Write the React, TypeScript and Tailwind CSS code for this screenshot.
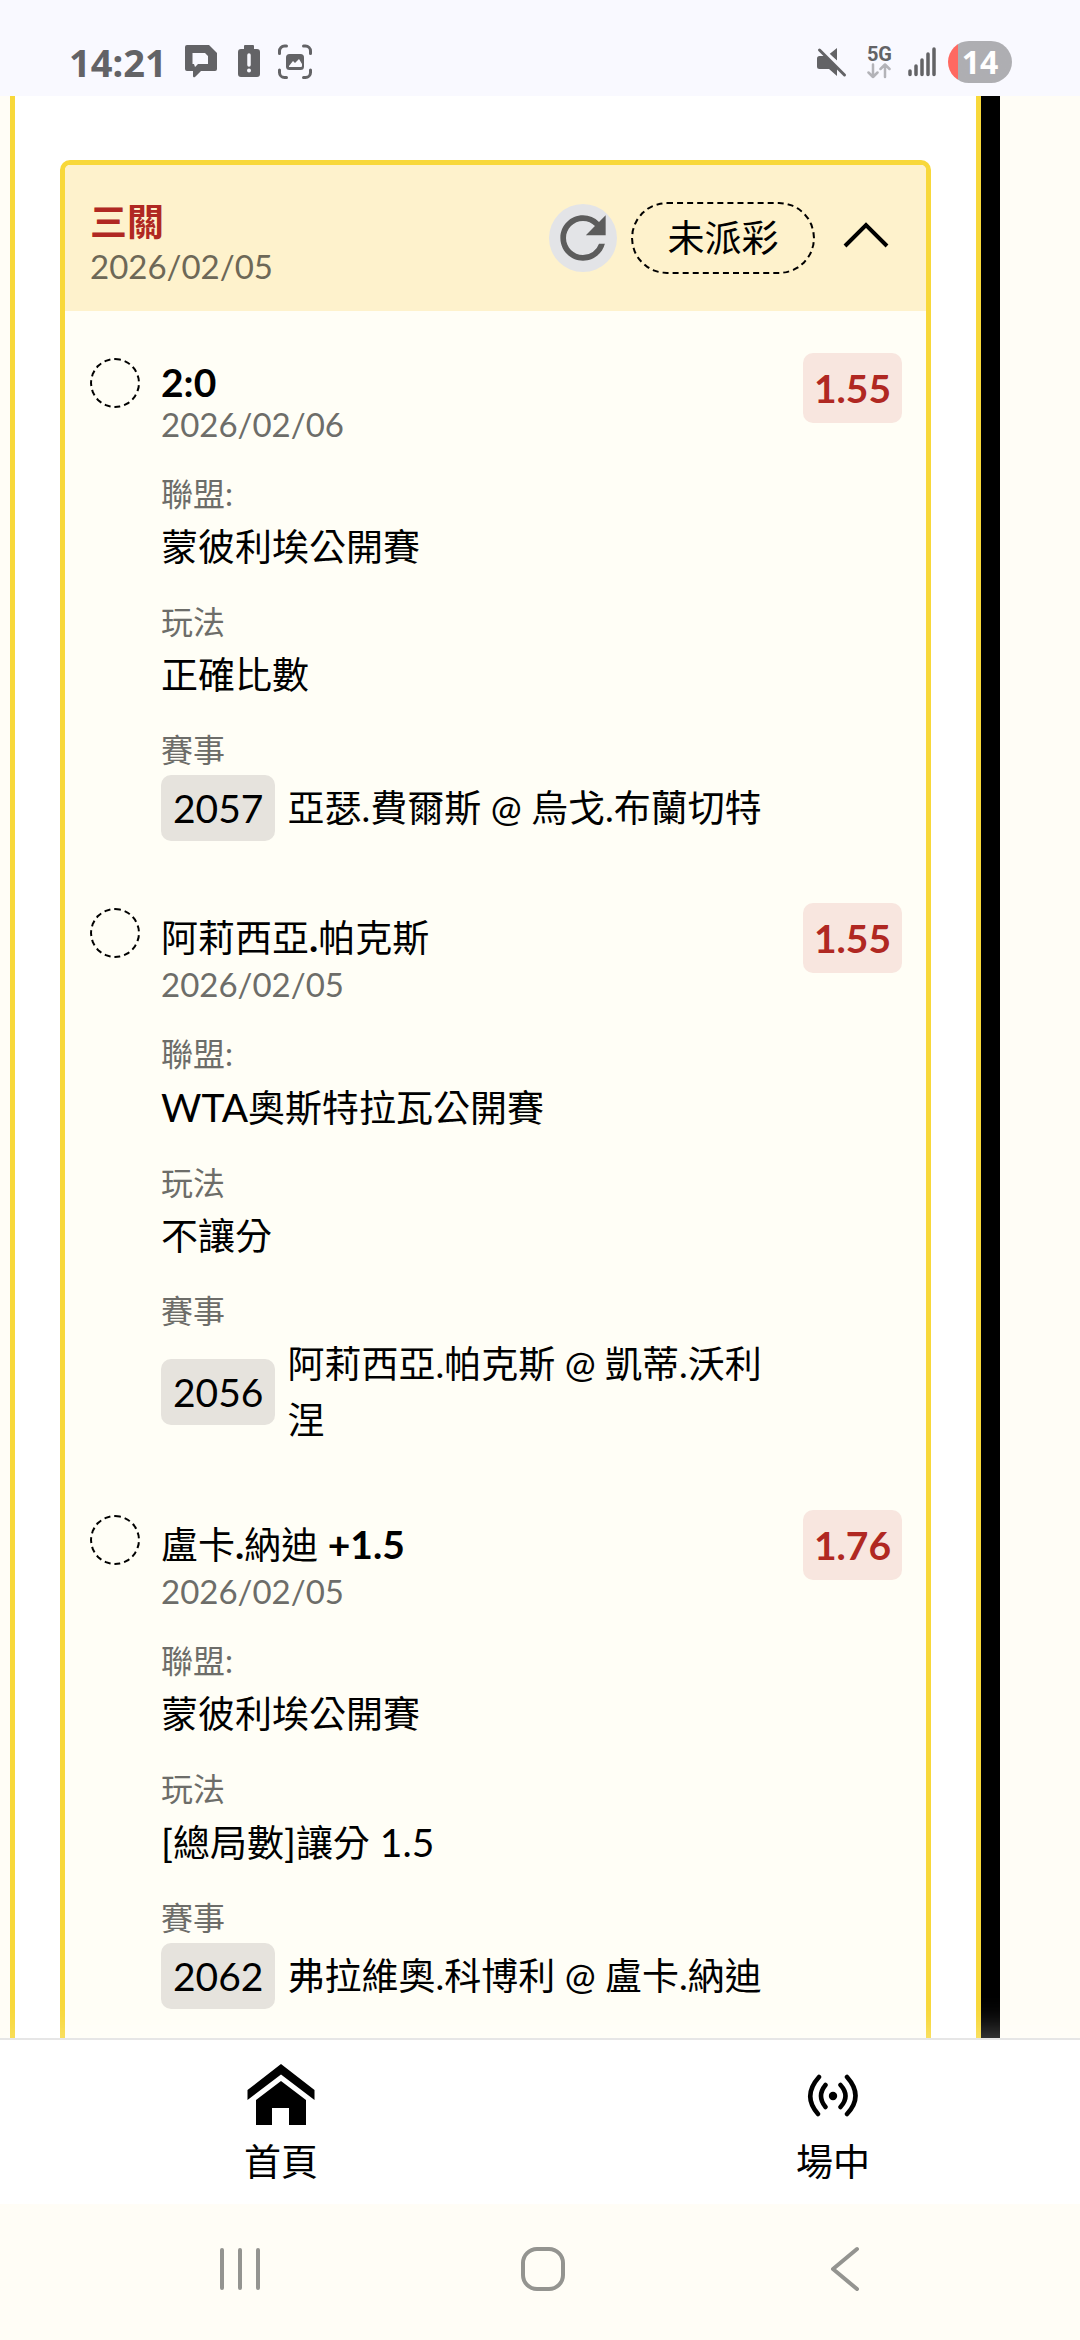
import { MdRefresh } from "react-icons/md";

type Leg = {
  pick: string;
  date: string;
  odds: string;
  league: string;
  play: string;
  code: string;
  match: string;
};

const legs: Leg[] = [
  {
    pick: "2:0",
    date: "2026/02/06",
    odds: "1.55",
    league: "蒙彼利埃公開賽",
    play: "正確比數",
    code: "2057",
    match: "亞瑟.費爾斯 @ 烏戈.布蘭切特",
  },
  {
    pick: "阿莉西亞.帕克斯",
    date: "2026/02/05",
    odds: "1.55",
    league: "WTA奧斯特拉瓦公開賽",
    play: "不讓分",
    code: "2056",
    match: "阿莉西亞.帕克斯 @ 凱蒂.沃利涅",
  },
  {
    pick: "盧卡.納迪 +1.5",
    date: "2026/02/05",
    odds: "1.76",
    league: "蒙彼利埃公開賽",
    play: "[總局數]讓分 1.5",
    code: "2062",
    match: "弗拉維奧.科博利 @ 盧卡.納迪",
  },
];

/* Latin runs are set slightly larger than the Chinese text around them. */
function Mixed({ text, bold = false }: { text: string; bold?: boolean }) {
  const runs = text.match(/[\u0000-\u00ff]+|[^\u0000-\u00ff]+/g) ?? [];
  return (
    <>
      {runs.map((run, i) =>
        run.charCodeAt(0) < 256 ? (
          <span key={i} className={bold ? "text-[39px] font-bold" : "text-[39px]"}>
            {run}
          </span>
        ) : (
          run
        ),
      )}
    </>
  );
}

function StatusBar() {
  return (
    <header className="flex h-24 shrink-0 items-center justify-between bg-[#f9f9ff] pt-7 pr-[68px] pl-[69px] text-[#636366]">
      <div className="flex items-center">
        <span className="font-['Noto_Sans'] text-[38px] leading-10 font-bold">14:21</span>
        <svg className="ml-[18px] h-9 w-8" viewBox="0 0 32 36" fill="currentColor" aria-label="訊息">
          <path
            fillRule="evenodd"
            d="M2 1h22l8 8v16a2 2 0 0 1-2 2H16l-6 6a1.200 1.200 0 0 1-2-1v-5H2a2 2 0 0 1-2-2V3a2 2 0 0 1 2-2Zm5.500 8v11H9l1 3 3-3h10v-8l-3-3Z"
          />
        </svg>
        <svg className="ml-5 h-9 w-6" viewBox="0 0 24 36" aria-label="電池">
          <path
            fill="currentColor"
            d="M8 1h8a1 1 0 0 1 1 1v3h3a3 3 0 0 1 3 3v22a3 3 0 0 1-3 3H4a3 3 0 0 1-3-3V8a3 3 0 0 1 3-3h3V2a1 1 0 0 1 1-1Z"
          />
          <path stroke="#f9f9ff" strokeWidth="3.500" strokeLinecap="round" d="M12 11v10" />
          <circle cx="12" cy="26.500" r="2" fill="#f9f9ff" />
        </svg>
        <svg className="ml-4 h-9 w-9" viewBox="0 0 36 36" fill="none" aria-label="螢幕擷取">
          <path
            stroke="currentColor"
            strokeWidth="3"
            strokeLinecap="round"
            d="M2.500 9.500V7a5 5 0 0 1 5-5h2M26.500 2h2a5 5 0 0 1 5 5v2.500M33.500 26v2.500a5 5 0 0 1-5 5h-2M9.500 33.500h-2a5 5 0 0 1-5-5V26"
          />
          <rect x="9" y="10" width="18" height="16" rx="3.500" fill="currentColor" />
          <path fill="#f9f9ff" d="m12 22 4-5 2 2 4-4 3 5v2a1 1 0 0 1-1 1H12Z" />
        </svg>
      </div>
      <div className="flex items-center">
        <svg className="h-8 w-8" viewBox="0 0 32 32" aria-label="靜音">
          <path
            fill="currentColor"
            d="M22 2v12.500L14.500 8ZM4.500 10h6L22 22v8l-8-7H4.500A2.500 2.500 0 0 1 2 20.500v-8A2.500 2.500 0 0 1 4.500 10Z"
          />
          <path stroke="#f9f9ff" strokeWidth="3" d="M6.500 1.500 31 26.500" />
          <path stroke="currentColor" strokeWidth="3" strokeLinecap="round" d="m4.500 4 25 25" />
        </svg>
        <div className="ml-5 flex flex-col items-center">
          <span className="font-[Roboto] text-xl leading-[18px] font-bold">5G</span>
          <svg
            className="h-4 w-6"
            viewBox="0 0 24 16"
            fill="none"
            stroke="#b3b3b8"
            strokeWidth="2.500"
            strokeLinecap="round"
            strokeLinejoin="round"
            aria-hidden="true"
          >
            <path d="M6 1.500V14M1.500 9.500 6 14l4.500-4.500M18 14V1.500M13.500 6 18 1.500 22.500 6" />
          </svg>
        </div>
        <svg
          className="ml-4 h-8 w-7"
          viewBox="0 0 28 32"
          stroke="currentColor"
          strokeWidth="3.500"
          strokeLinecap="round"
          aria-label="訊號"
        >
          <path d="M2 25v3.500M8 20v8.500M14 14v14.500M20 8v20.500M26 3v25.500" />
        </svg>
        <span className="ml-3 flex h-[42px] w-16 items-center justify-center rounded-full bg-linear-to-r from-[#ff6961] from-16% to-[#aeaeb2] to-16% font-['Noto_Sans'] text-[32px] leading-none font-bold text-white">
          14
        </span>
      </div>
    </header>
  );
}

function LegItem({ leg }: { leg: Leg }) {
  const latinOnly = /^[\u0000-\u00ff]+$/.test(leg.pick);
  return (
    <li className="flex items-start">
      <span className="mt-[5px] size-[50px] shrink-0 rounded-full border-2 border-dashed border-black" />
      <div className="ml-[21px] min-w-0 flex-1 pt-[6px]">
        <h3 className={latinOnly ? "leading-[46px]" : "leading-[57px]"}>
          <Mixed text={leg.pick} bold />
        </h3>
        <p className="text-[33px] leading-[36px] text-[#6d6d69]">{leg.date}</p>
        <dl className="mt-[27px] flex flex-col gap-[22px]">
          <div>
            <dt className="text-[32px] leading-[50px] text-[#6d6d69]">聯盟:</dt>
            <dd className="leading-[56px]">
              <Mixed text={leg.league} />
            </dd>
          </div>
          <div>
            <dt className="text-[32px] leading-[50px] text-[#6d6d69]">玩法</dt>
            <dd className="leading-[56px]">
              <Mixed text={leg.play} />
            </dd>
          </div>
          <div>
            <dt className="text-[32px] leading-[50px] text-[#6d6d69]">賽事</dt>
            <dd className="flex items-center gap-3 leading-[56px]">
              <span className="shrink-0 rounded-[10px] bg-[#e6e3dd] px-[12px] py-[5px] text-[39px]">
                {leg.code}
              </span>
              <span>{leg.match}</span>
            </dd>
          </div>
        </dl>
      </div>
      <strong className="ml-7 shrink-0 rounded-[10px] bg-[#f8e6df] px-[11px] py-[7px] text-[39px] leading-[56px] font-bold text-[#b02822]">
        {leg.odds}
      </strong>
    </li>
  );
}

function BetCard() {
  return (
    <section className="overflow-hidden rounded-[10px] border-5 border-[#f8d83a] bg-[#fffef6]">
      <div className="flex h-[146px] items-center bg-[#fef2cc] pr-[35px] pl-[25px]">
        <div className="flex-1 pt-2">
          <h2 className="leading-[48px] font-bold text-[#b02822]">三關</h2>
          <p className="text-[33px] leading-10 text-[#6d6857]">2026/02/05</p>
        </div>
        <button
          type="button"
          aria-label="重新整理"
          className="flex size-[68px] items-center justify-center rounded-full bg-[#e3e4e7] text-[#5c5c5c]"
        >
          <MdRefresh className="size-[68px]" />
        </button>
        <span className="ml-[14px] flex h-[72px] w-[184px] items-center justify-center rounded-full border-2 border-dashed border-black">
          未派彩
        </span>
        <button type="button" aria-label="收合" className="ml-[26px] p-0">
          <svg
            className="h-[36px] w-[50px]"
            viewBox="0 0 50 36"
            fill="none"
            stroke="black"
            strokeWidth="4"
          >
            <path d="M4 26 25 5l21 21" />
          </svg>
        </button>
      </div>
      <ul className="flex flex-col gap-[62px] py-[42px] pr-6 pl-[25px]">
        {legs.map((leg) => (
          <LegItem key={leg.code} leg={leg} />
        ))}
      </ul>
    </section>
  );
}

function TabBar() {
  return (
    <nav className="relative flex h-[166px] shrink-0 justify-between border-t-2 border-[#e6e6e6] bg-white pt-6 pr-[87px] pl-[121px] text-black shadow-[0_-6px_30px_rgba(255,255,255,0.3)]">
      <a href="#home" className="flex w-80 flex-col items-center">
        <svg className="h-16 w-17" viewBox="0 0 68 64" aria-hidden="true">
          <path d="M34 0 67.500 26v10L34 10.500.500 36V26Z" />
          <path d="M34 17 59 36v25H42V44H25v17H9V36Z" />
        </svg>
        <span className="mt-[6px] leading-[56px]">首頁</span>
      </a>
      <a href="#live" className="flex w-80 flex-col items-center">
        <svg
          className="h-16 w-17"
          viewBox="0 0 68 64"
          fill="none"
          stroke="black"
          strokeWidth="4.500"
          strokeLinecap="round"
          aria-hidden="true"
        >
          <circle cx="34" cy="32" r="4.200" fill="black" stroke="none" />
          <path d="M20 13q-17 19-1 37M48 13q17 19 0 37M26.500 21q-9 11 0 22M41.500 21q10 11 0 22" />
        </svg>
        <span className="mt-[6px] leading-[56px]">場中</span>
      </a>
    </nav>
  );
}

function SystemBar() {
  return (
    <div className="flex h-[136px] shrink-0 items-center justify-between bg-[#fffdf6] pr-[210px] pb-[6px] pl-[215px] text-[#949490]">
      <button type="button" aria-label="最近使用">
        <svg className="size-[50px]" viewBox="0 0 50 50" stroke="currentColor" strokeWidth="4" strokeLinecap="round">
          <path d="M7 6v38M25 6v38M43 6v38" />
        </svg>
      </button>
      <button type="button" aria-label="主畫面">
        <svg className="size-[50px]" viewBox="0 0 50 50" fill="none" stroke="currentColor" strokeWidth="4">
          <rect x="5" y="5" width="40" height="40" rx="14" />
        </svg>
      </button>
      <button type="button" aria-label="返回">
        <svg
          className="size-[50px]"
          viewBox="0 0 50 50"
          fill="none"
          stroke="currentColor"
          strokeWidth="4"
          strokeLinecap="round"
          strokeLinejoin="round"
        >
          <path d="M37 5 13 25l24 20" />
        </svg>
      </button>
    </div>
  );
}

export default function App() {
  return (
    <div
      lang="zh-Hant"
      className="flex h-screen flex-col overflow-hidden bg-[#fffdf6] font-[Lato,'Noto_Sans_CJK_TC',sans-serif] text-[37px] text-black"
    >
      <StatusBar />
      <main className="flex min-h-0 flex-1 overflow-hidden pl-[10px]">
        <div className="flex-1 border-x-5 border-[#f8d83a] bg-white px-[45px] pt-16">
          <BetCard />
        </div>
        <div className="w-[19px] bg-black" />
        <div className="w-20" />
      </main>
      <TabBar />
      <SystemBar />
    </div>
  );
}
